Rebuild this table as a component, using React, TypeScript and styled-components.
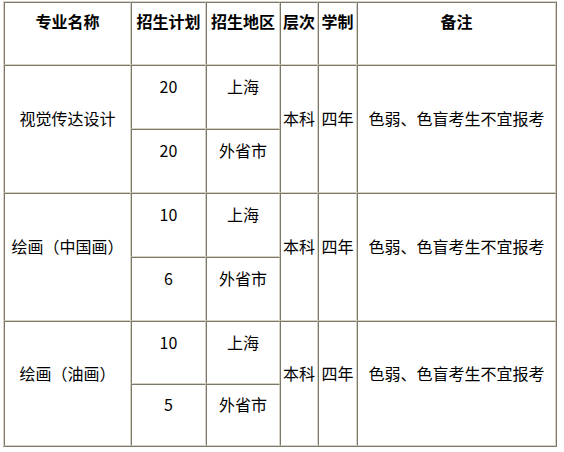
import { Fragment } from 'react';
import styled, { createGlobalStyle } from 'styled-components';

const GlobalStyle = createGlobalStyle`
  body {
    margin: 0;
    background: #ffffff;
    font-family: "Noto Sans CJK SC", "Microsoft YaHei", sans-serif;
  }
`;

const light = '#d6d1c3';
const dark = '#7c786b';

const Wrapper = styled.div`
  padding: 1px 0 0 3px;
`;

const Table = styled.table`
  width: 554px;
  table-layout: fixed;
  border-collapse: separate;
  border-spacing: 0;
  border: 1px solid;
  border-color: ${light} ${dark} ${dark} ${light};
  color: #000;
  font-size: 16px;
  line-height: 24px;
`;

const Cell = styled.td<{ $h?: number }>`
  box-sizing: border-box;
  height: ${(p) => (p.$h ? `${p.$h}px` : 'auto')};
  padding: 0 2px 22px;
  border: 1px solid;
  border-color: ${dark} ${light} ${light} ${dark};
  text-align: center;
  vertical-align: middle;
  white-space: nowrap;
`;

const HeadCell = styled(Cell).attrs({ as: 'th' })`
  padding-bottom: 26px;
  font-weight: 700;
`;

const widths = [127, 75, 74, 38, 39, 199];

const groups = [
  { name: '视觉传达设计', plan: ['20', '20'], h: [64, 64] },
  { name: '绘画（中国画）', plan: ['10', '6'], h: [64, 64] },
  { name: '绘画（油画）', plan: ['10', '5'], h: [63, 62] },
];

export default function App() {
  return (
    <>
      <GlobalStyle />
      <Wrapper>
        <Table>
          <colgroup>
            {widths.map((w, i) => (
              <col key={i} style={{ width: w }} />
            ))}
          </colgroup>
          <thead>
            <tr>
              <HeadCell $h={63}>专业名称</HeadCell>
              <HeadCell $h={63}>招生计划</HeadCell>
              <HeadCell $h={63}>招生地区</HeadCell>
              <HeadCell $h={63}>层次</HeadCell>
              <HeadCell $h={63}>学制</HeadCell>
              <HeadCell $h={63}>备注</HeadCell>
            </tr>
          </thead>
          <tbody>
            {groups.map((g) => (
              <Fragment key={g.name}>
                <tr>
                  <Cell rowSpan={2}>{g.name}</Cell>
                  <Cell $h={g.h[0]}>{g.plan[0]}</Cell>
                  <Cell $h={g.h[0]}>上海</Cell>
                  <Cell rowSpan={2}>本科</Cell>
                  <Cell rowSpan={2}>四年</Cell>
                  <Cell rowSpan={2}>色弱、色盲考生不宜报考</Cell>
                </tr>
                <tr>
                  <Cell $h={g.h[1]}>{g.plan[1]}</Cell>
                  <Cell $h={g.h[1]}>外省市</Cell>
                </tr>
              </Fragment>
            ))}
          </tbody>
        </Table>
      </Wrapper>
    </>
  );
}
